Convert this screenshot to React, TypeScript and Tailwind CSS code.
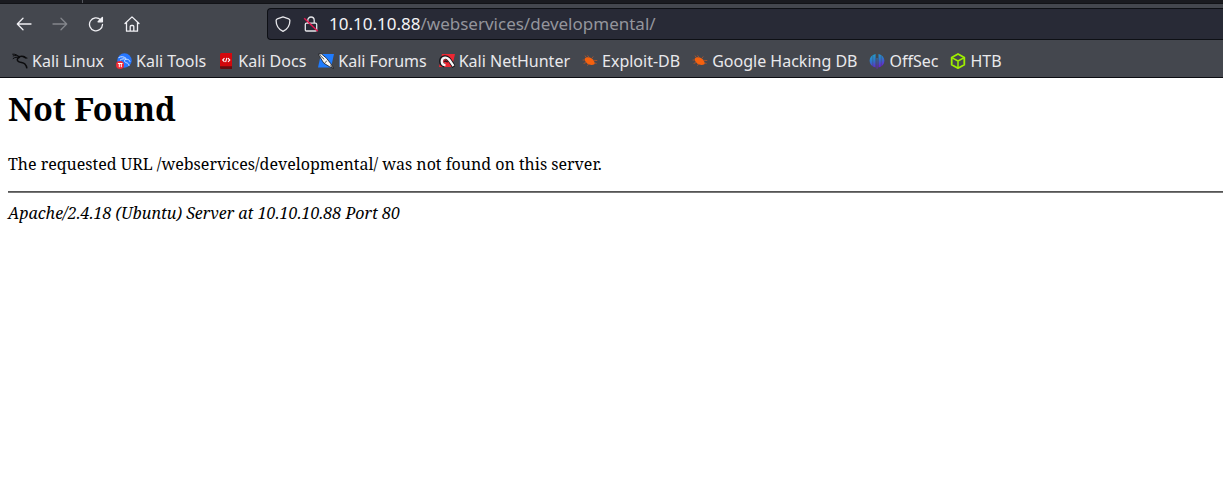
import type { ReactNode } from "react";

function KaliDragon() {
  return (
    <svg viewBox="0 0 16 16" className="size-4" fill="none" stroke="#0b0b0d" aria-hidden="true">
      <path d="M.3 1.2C3 .9 5 1.800 7.500 4M.8 3C3.500 2 5.500 2.600 8 4.300M.8 5.800c2-1.700 4-1.800 7-1.200" strokeWidth="1" />
      <path d="M6.500 3.800c3-1 6-.6 7.600 1.200M7.200 4.500c-2.200.6-2.600 3.100-.6 4.200 2.200 1.200 4.600.6 6.300 2.300 1 1 1.700 2.500 2 4.300" strokeWidth="1.500" />
      <path d="M11 3.200l2 1.600 2.400.4" strokeWidth="1.100" />
    </svg>
  );
}

function ToolsIcon() {
  return (
    <svg viewBox="0 0 16 16" className="size-4" fill="none" aria-hidden="true">
      <circle cx="8.500" cy="7.500" r="7.200" fill="#2777ff" />
      <path d="M2.500 4.700c3-1.700 5.700-1 7.700.8M4 7.200c2-1.600 4-1.600 6-1 2.300 0 3.500 1 4 2.500M9.800 6.200c-2 1-1.500 3 .7 3.600 1.500.4 2.500 1.400 2.500 3" stroke="#d8e8ff" strokeWidth="1" />
      <circle cx="4" cy="11.900" r="4" fill="#f02a35" />
      <path d="M1.900 10.500h4.600M3.300 10.500v3.700M5.300 10.500v3.700" stroke="#fff" strokeWidth="1" />
    </svg>
  );
}

function DocsIcon() {
  return (
    <svg viewBox="0 0 16 16" className="size-4" fill="none" aria-hidden="true">
      <path d="M2 1.500Q2 0 3.500 0H14v16H3.500Q2 16 2 14.500z" fill="#d3080d" />
      <path d="M2 13.200h12V16H3.500Q2 16 2 14.500z" fill="#650d10" />
      <path d="M6.500 5.200L4.700 7l1.800 1.800M10 5.200L11.800 7 10 8.800M8.900 4.800L7.600 9.200" stroke="#fff" strokeWidth="1.100" />
    </svg>
  );
}

function ForumsIcon() {
  return (
    <svg viewBox="0 0 16 16" className="size-4" fill="none" aria-hidden="true">
      <path d="M3 1h13l-3 13.500H0z" fill="#1f7cff" />
      <path d="M.3 1.200l3-.4 5.200 4.400 4.300 5.500L16 15.500l-4.600-1.900-5.600-3.400L2.600 5z" fill="#f5f5f5" stroke="#17181c" strokeWidth=".8" />
      <path d="M1.500 1.800l4.700 4.600M6.500 10l2.300-2M12.300 12l2.200 2.200" stroke="#17181c" strokeWidth=".8" />
    </svg>
  );
}

function NetHunterIcon() {
  return (
    <svg viewBox="0 0 16 16" className="size-4" fill="none" aria-hidden="true">
      <path d="M3 1h13l-3 13H0z" fill="#ee2733" />
      <path d="M5.500 12.500C1 11.500.8 5 5.500 4.200c4-.6 5.500 3.500 9.500 9.600" stroke="#17181c" strokeWidth="4" />
      <path d="M6.500 12.200C1.800 12 1.400 5.300 6 4.600c3.700-.5 5 3.400 8.500 8.400" stroke="#f7f7f7" strokeWidth="2.300" />
      <path d="M5.300 8.800c1.100-1.300 2.600-.8 3.200.6" stroke="#17181c" strokeWidth="1.400" />
    </svg>
  );
}

function BugIcon() {
  return (
    <svg viewBox="0 0 16 16" className="size-4" fill="none" aria-hidden="true">
      <path d="M2.800 5.600C4.400 3.800 7.500 4 9.800 5.600c1.800 1.300 3 3.200 3 5.500-2.200 1.300-5.400 1.100-7.600-.6C3.500 9.200 2.600 7.500 2.800 5.600z" fill="#f5610e" />
      <path d="M4.500 4.800L3 2.600M7.200 4.500L5.500 2.300M9.800 5.300l1.500-1.800M11.700 7.400l3.600.1M2.800 7L.6 7M4.200 9.500l-2.600 1M6.800 11L5 12.600M12.600 9.800l2 .8" stroke="#b9572a" strokeWidth=".8" />
    </svg>
  );
}

function OffSecIcon() {
  return (
    <svg viewBox="0 0 16 16" className="size-4" aria-hidden="true">
      <defs>
        <linearGradient id="offsec" x1="0" y1="0" x2=".3" y2="1">
          <stop offset="0" stopColor="#20a7cf" />
          <stop offset=".5" stopColor="#2e75c9" />
          <stop offset="1" stopColor="#6a1fd0" />
        </linearGradient>
      </defs>
      <path d="M6.600 1v13.500C2.700 13.500.6 11 .6 7.800S2.700 2 6.600 1zM7.600 5h.9v10.800h-.9zM9.500 1c3.800 1 5.900 3.600 5.900 6.800s-2.100 5.700-5.900 6.700z" fill="url(#offsec)" />
      <path d="M3.800 2.500v10.800M12.300 2.500v10.800" stroke="#44474e" strokeWidth=".4" />
    </svg>
  );
}

function CubeIcon() {
  return (
    <svg viewBox="0 0 16 16" className="size-4" fill="none" stroke="#9fef00" strokeWidth="1.800" strokeLinejoin="round" aria-hidden="true">
      <path d="M8 1l6.300 3.500v7.200L8 15.200l-6.300-3.500V4.500z" />
      <path d="M2.200 4.900L8 8l5.800-3.100M8 8v6.500" strokeWidth="1.500" />
    </svg>
  );
}

function NavButton({ label, disabled, children }: { label: string; disabled?: boolean; children: ReactNode }) {
  return (
    <button
      type="button"
      aria-label={label}
      disabled={disabled}
      className="flex size-9 items-center justify-center text-[#f0f0f4] disabled:text-[#84868c]"
    >
      <svg viewBox="0 0 16 16" className="size-4" fill="none" stroke="currentColor" strokeWidth="1.300" strokeLinecap="round" strokeLinejoin="round" aria-hidden="true">
        {children}
      </svg>
    </button>
  );
}

const bookmarks: { name: string; href: string; icon: ReactNode }[] = [
  { name: "Kali Linux", href: "#kali-linux", icon: <KaliDragon /> },
  { name: "Kali Tools", href: "#kali-tools", icon: <ToolsIcon /> },
  { name: "Kali Docs", href: "#kali-docs", icon: <DocsIcon /> },
  { name: "Kali Forums", href: "#kali-forums", icon: <ForumsIcon /> },
  { name: "Kali NetHunter", href: "#kali-nethunter", icon: <NetHunterIcon /> },
  { name: "Exploit-DB", href: "#exploit-db", icon: <BugIcon /> },
  { name: "Google Hacking DB", href: "#google-hacking-db", icon: <BugIcon /> },
  { name: "OffSec", href: "#offsec-site", icon: <OffSecIcon /> },
  { name: "HTB", href: "#htb", icon: <CubeIcon /> },
];

export default function App() {
  return (
    <div className="min-h-screen overflow-x-hidden bg-white">
      <header className="border-b border-[#0c0d12] bg-[#44474e] font-['Noto_Sans',sans-serif]">
        <div className="flex h-1 border-b border-[#121317] bg-[#1a1b20]">
          <div className="w-[83px] border-r border-[#55575e]" />
        </div>
        <div className="flex h-10 items-center pl-1.5">
          <nav aria-label="Navigation" className="flex">
            <NavButton label="Back">
              <path d="M15 8H1.500M7 2.300L1.300 8 7 13.700" />
            </NavButton>
            <NavButton label="Forward" disabled>
              <path d="M1 8h13.500M9 2.300L14.700 8 9 13.700" />
            </NavButton>
            <NavButton label="Reload">
              <path d="M12.600 3.700A6.500 6.500 0 1 0 14.500 8.500" />
              <path d="M14.400 1.500v4.300h-4.300z" fill="currentColor" />
            </NavButton>
            <NavButton label="Home">
              <path d="M1 7.500L8 .9l7 6.600M2.500 6.500v8.700h11V6.500M6.200 15V10.500q0-1 1-1h1.600q1 0 1 1V15" />
            </NavButton>
          </nav>
          <div className="ml-[117px] flex h-8 flex-1 items-center rounded-l-sm border border-r-0 border-[#0e1015] bg-[#282a36] pl-[7px] text-[17px]">
            <svg viewBox="0 0 16 16" className="size-4 shrink-0" fill="none" stroke="#e6e6ea" strokeWidth="1.300" strokeLinejoin="round" aria-hidden="true">
              <path d="M8 .8l5.700 2Q14.900 3.300 14.900 4.500C14.900 9.500 12 13.500 8 15.300 4 13.500 1.100 9.500 1.100 4.500Q1.100 3.300 2.300 2.800z" />
            </svg>
            <svg viewBox="0 0 16 16" className="ml-3 size-4 shrink-0" fill="none" aria-hidden="true">
              <path d="M4.800 7V4.200a3.200 3.200 0 0 1 6.400 0V7M3.500 7.200h9q1.200 0 1.200 1.200v5.400q0 1.200-1.200 1.200h-9q-1.200 0-1.200-1.200V8.400q0-1.200 1.200-1.200z" stroke="#e6e6ea" strokeWidth="1.300" />
              <path d="M1.200 2.200l13.600 13" stroke="#e2174f" strokeWidth="1.500" />
            </svg>
            <label htmlFor="address" className="ml-2.5 text-[#f4f4f6]">10.10.10.88</label>
            <input
              id="address"
              type="text"
              defaultValue="/webservices/developmental/"
              className="min-w-0 flex-1 bg-transparent text-[#94959c] outline-none"
            />
          </div>
        </div>
        <nav aria-label="Bookmarks" className="flex h-[33px] items-center gap-3 overflow-hidden pl-3 text-base text-[#e9e9ec]">
          {bookmarks.map((b) => (
            <a key={b.name} href={b.href} className="flex shrink-0 items-center gap-1 whitespace-nowrap">
              {b.icon}
              {b.name}
            </a>
          ))}
        </nav>
      </header>
      <main className="px-2 pt-[9px] pr-0 font-['Noto_Serif','Liberation_Serif',serif] text-base text-black">
        <h1 className="text-[32px] leading-[44px] font-bold">Not Found</h1>
        <p className="mt-[22px] leading-[22px]">The requested URL /webservices/developmental/ was not found on this server.</p>
        <hr className="mt-4 mb-[9px] h-0.5 border-t border-b border-t-[#555555] border-b-[#777777]" />
        <address className="leading-[22px] italic">Apache/2.4.18 (Ubuntu) Server at 10.10.10.88 Port 80</address>
      </main>
    </div>
  );
}
